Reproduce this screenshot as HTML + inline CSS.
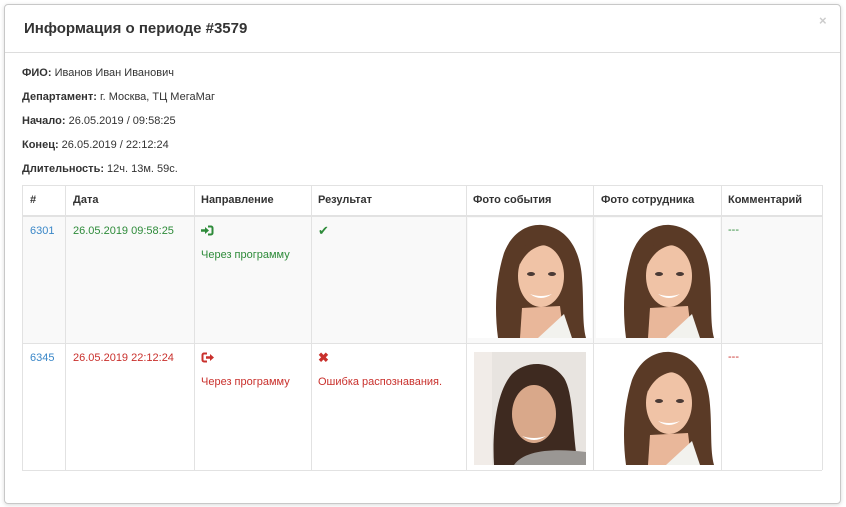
<!DOCTYPE html>
<html><head><meta charset="utf-8"><style>
body{margin:0;width:846px;height:507px;background:#fff;font-family:"Liberation Sans",Arial,sans-serif;position:relative;overflow:hidden}
.modal{position:absolute;left:4px;top:4px;width:835px;height:498px;border:1px solid #c8c8c8;border-radius:4px;box-shadow:0 1px 4px rgba(0,0,0,.15)}
.t{position:absolute;font-size:11px;color:#333;white-space:nowrap}
.b{font-weight:bold}
h1{position:absolute;left:24px;top:20px;margin:0;font-size:15px;font-weight:bold;color:#333}
.x{position:absolute;left:819px;top:13px;color:#ccc;font-size:13px;font-weight:bold}
.hl{position:absolute;left:5px;top:52px;width:835px;border-top:1px solid #ddd}
.v{position:absolute;width:1px;background:#e2e2e2;top:185px;height:285px}
.h{position:absolute;height:1px;background:#e2e2e2;left:22px;width:800px}
.g{color:#2e8b3a}.r{color:#c9302c}.bl{color:#3a87c8}
</style></head><body>
<svg width="0" height="0" style="position:absolute"><defs>
<symbol id="face" viewBox="0 0 124 120">
<rect width="124" height="120" fill="#fff"/>
<path d="M30 120 C26 90 28 60 36 35 C44 14 60 6 74 7 C98 9 112 30 114 60 C116 85 114 105 118 120 Z" fill="#5a3a26"/>
<path d="M54 90 L52 120 L96 120 L92 88 Z" fill="#e9b79a"/>
<ellipse cx="73" cy="58" rx="23" ry="31" fill="#f0c3a6"/>
<path d="M48 40 C54 24 70 18 92 30 C80 24 62 26 52 46 Z" fill="#5a3a26"/>
<path d="M62 76 Q73 84 84 76 Q73 80 62 76Z" fill="#fff"/>
<ellipse cx="63" cy="56" rx="4" ry="2" fill="#4a3a35"/><ellipse cx="84" cy="56" rx="4" ry="2" fill="#4a3a35"/>
<path d="M70 120 L96 96 L104 120 Z" fill="#f2f2ee"/>
</symbol>
<symbol id="face2" viewBox="0 0 112 113">
<rect width="112" height="113" fill="#e8e4e0"/>
<rect x="0" y="0" width="18" height="113" fill="#f1ece8"/>
<path d="M20 113 C18 80 22 40 38 22 C52 8 78 8 90 26 C100 42 98 80 104 113Z" fill="#3e2a20"/>
<ellipse cx="60" cy="62" rx="22" ry="29" fill="#d9a88a"/>
<path d="M48 84 Q60 92 72 84 Q60 88 48 84Z" fill="#fff"/>
<path d="M40 113 C50 98 80 96 112 100 L112 113Z" fill="#9a9794"/>
</symbol>
</defs></svg>
<div class="modal"></div>
<h1>Информация о периоде #3579</h1>
<div class="x">×</div>
<div class="hl"></div>
<div class="t" style="left:22px;top:67px"><span class="b">ФИО:</span> Иванов Иван Иванович</div>
<div class="t" style="left:22px;top:91px"><span class="b">Департамент:</span> г. Москва, ТЦ МегаМаг</div>
<div class="t" style="left:22px;top:115px"><span class="b">Начало:</span> 26.05.2019 / 09:58:25</div>
<div class="t" style="left:22px;top:139px"><span class="b">Конец:</span> 26.05.2019 / 22:12:24</div>
<div class="t" style="left:22px;top:163px"><span class="b">Длительность:</span> 12ч. 13м. 59с.</div>

<div style="position:absolute;left:22px;top:216px;width:800px;height:127px;background:#f9f9f9"></div>
<div class="h" style="top:185px"></div><div class="h" style="top:215px;height:2px"></div><div class="h" style="top:343px"></div><div class="h" style="top:470px"></div>
<div class="v" style="left:22px"></div><div class="v" style="left:65px"></div><div class="v" style="left:194px"></div><div class="v" style="left:311px"></div><div class="v" style="left:466px"></div><div class="v" style="left:593px"></div><div class="v" style="left:721px"></div><div class="v" style="left:822px"></div>

<div class="t b" style="left:30px;top:194px">#</div>
<div class="t b" style="left:73px;top:194px">Дата</div>
<div class="t b" style="left:201px;top:194px">Направление</div>
<div class="t b" style="left:318px;top:194px">Результат</div>
<div class="t b" style="left:473px;top:194px">Фото события</div>
<div class="t b" style="left:601px;top:194px">Фото сотрудника</div>
<div class="t b" style="left:728px;top:194px">Комментарий</div>

<div class="t bl" style="left:30px;top:225px">6301</div>
<div class="t g" style="left:73px;top:225px">26.05.2019 09:58:25</div>
<svg style="position:absolute;left:201px;top:225px" width="13" height="11" viewBox="0 0 13 11"><path d="M7 1.5h3a1.5 1.5 0 0 1 1.5 1.5v5a1.5 1.5 0 0 1-1.5 1.5H7" fill="none" stroke="#2e8b3a" stroke-width="2"/><path d="M0 4.3h4V2l4 3.5-4 3.5V6.7H0z" fill="#2e8b3a"/></svg>
<div class="t g" style="left:201px;top:249px">Через программу</div>
<div class="t g" style="left:318px;top:223px;font-size:13px">✔</div>
<svg style="position:absolute;left:468px;top:218px" width="124" height="120"><use href="#face"/></svg>
<svg style="position:absolute;left:596px;top:218px" width="124" height="120"><use href="#face"/></svg>
<div class="t g" style="left:728px;top:224px">---</div>

<div class="t bl" style="left:30px;top:352px">6345</div>
<div class="t r" style="left:73px;top:352px">26.05.2019 22:12:24</div>
<svg style="position:absolute;left:201px;top:352px" width="13" height="11" viewBox="0 0 13 11"><path d="M6 1.5H3A1.5 1.5 0 0 0 1.5 3v5A1.5 1.5 0 0 0 3 9.5h3" fill="none" stroke="#c9302c" stroke-width="2"/><path d="M5 4.3h4V2l4 3.5-4 3.5V6.7H5z" fill="#c9302c"/></svg>
<div class="t r" style="left:201px;top:376px">Через программу</div>
<div class="t r b" style="left:318px;top:350px;font-size:13px">✖</div>
<div class="t r" style="left:318px;top:376px">Ошибка распознавания.</div>
<svg style="position:absolute;left:474px;top:352px" width="112" height="113"><use href="#face2"/></svg>
<svg style="position:absolute;left:596px;top:345px" width="124" height="120"><use href="#face"/></svg>
<div class="t r" style="left:728px;top:351px">---</div>
</body></html>
